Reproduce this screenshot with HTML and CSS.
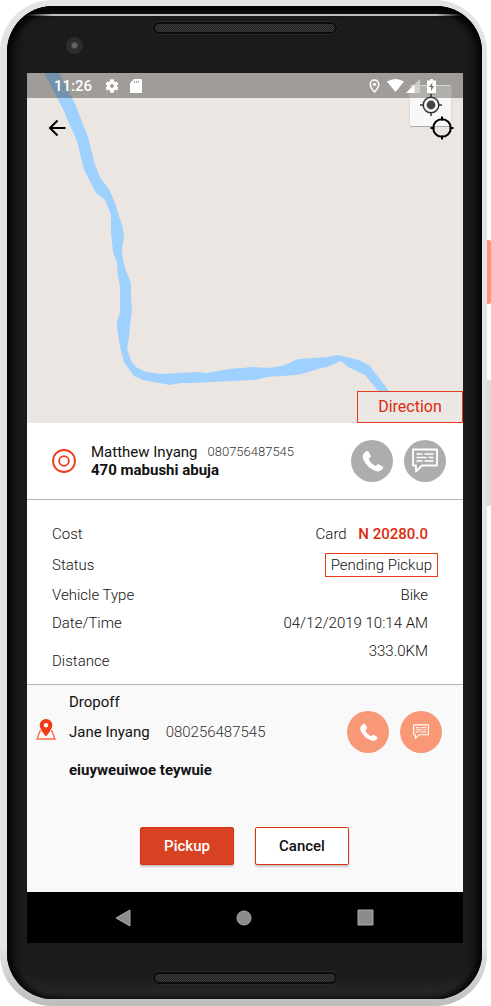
FILE: index.html
```html
<!DOCTYPE html>
<html lang="en">
<head>
<meta charset="utf-8">
<meta name="viewport" content="width=device-width, initial-scale=1">
<title>Delivery request</title>
<link rel="stylesheet" href="styles.css">
</head>
<body>
<svg class="defs" aria-hidden="true">
  <symbol id="phone" viewBox="0 0 24 24"><path d="M6.2 2.2c.6-.5 1.4-.4 1.900.2l2 3.500c.4.7.3 1.500-.3 2L8.400 9.200c.4 2.600 3.500 5.900 6.500 7l1.600-1.200c.5-.4 1.200-.5 1.800-.1l3.300 2c.7.400.8 1.300.3 1.900-1.500 2-3.500 3.200-6 2.500C9.300 19.500 3.500 13.500 2.500 7.500c-.3-2.200 1.700-4 3.700-5.300z" fill="#fff"/></symbol>
  <symbol id="chat" viewBox="0 0 28 26"><path d="M2 1.500h24v16H11l-6 6v-6H2z" fill="none" stroke="#fff" stroke-width="1.800" stroke-linejoin="round"/><path d="M5.500 6h6m2 0h9M5.500 9.500h10m2 0h5M5.500 13h6m2 0h9" fill="none" stroke="#fff" stroke-width="1.600"/></symbol>
</svg>
<div class="phone">
  <div class="side-keys"><span class="power"></span><span class="volume"></span></div>
  <div class="bezel">
    <div class="bezel-top"><span class="camera"></span><span class="speaker"></span></div>
    <main class="screen">
      <section class="map">
        <svg class="river" viewBox="0 0 436 350" preserveAspectRatio="xMinYMin slice" aria-hidden="true">
          <path fill="#9fd1ff" d="M17 0L32 0L49 33L61 64L68 92L74 106L82 116L88 130L92 143L95 152L97 163L95 177L96 187L99 198L104 210L104 227L105 237L103 252L102 265L100 276L104 288L109 294L119 299L135 301L170 299L180 300L202 296L227 294L241 295L255 293L271 286L300 284L311 282L332 287L343 293L362 318L373 334L362 334L351 318L338 302L321 294L314 288L300 294L290 296L282 299L270 302L240 304L228 307L183 309L166 310L154 310L143 312L116 307L107 303L97 289L93 274L90 255L90 249L93 239L93 214L91 203L90 190L86 179L84 160L84 142L78 127L69 120L57 97L50 68L34 32Z"/>
        </svg>
        <div class="status-bar">
          <span class="time">11:26</span>
          <svg width="16" height="16" viewBox="0 0 24 24"><path fill="#fff" fill-rule="evenodd" d="M19.400 13a7.800 7.800 0 0 0 0-2l2.300-1.700-2.300-4-2.700 1.100a8 8 0 0 0-1.700-1L14.600 2h-5.200L9 5.400a8 8 0 0 0-1.700 1L4.600 5.300l-2.300 4L4.600 11a7.800 7.800 0 0 0 0 2l-2.300 1.700 2.300 4 2.700-1.100a8 8 0 0 0 1.700 1l.4 3.400h5.200l.4-3.400a8 8 0 0 0 1.700-1l2.700 1.100 2.300-4zM12 15a3 3 0 1 1 0-6 3 3 0 0 1 0 6z"/></svg>
          <svg class="sd" width="12" height="14" viewBox="0 0 12 14"><path fill="#fff" d="M4 0h7q1 0 1 1v12q0 1-1 1H1q-1 0-1-1V4z"/><path d="M4.500 2v2m2-2v2m2-2v2" stroke="#a4a19b"/></svg>
          <span class="signals">
            <svg class="place" width="11" height="14" viewBox="0 0 11 14"><path d="M5.500 1a4.200 4.200 0 0 0-4.200 4.200C1.300 8.500 5.500 13 5.500 13s4.200-4.500 4.200-7.800A4.200 4.200 0 0 0 5.500 1z" fill="none" stroke="#fff" stroke-width="1.500"/><circle cx="5.500" cy="5.300" r="1.600" fill="#fff"/></svg>
            <svg width="17" height="13" viewBox="0 0 17 13"><path fill="#fff" d="M0 2.500Q8.500-2.500 17 2.500L8.500 13z"/></svg>
            <svg width="14" height="14" viewBox="0 0 14 14"><path fill="#d0cecb" d="M14 0v14H0z"/><path fill="#fff" d="M8.500 5.500V14H0z"/></svg>
            <svg class="battery" width="9" height="14" viewBox="0 0 9 14"><path fill="#fff" d="M3 0h3v1.500h3V14H0V1.500h3z"/><path fill="#77746f" d="M5.500 3.500L2 8h2v4l3-5H5z"/></svg>
          </span>
        </div>
        <div class="toolbar">
          <button class="icon-button" aria-label="Back"><svg width="18" height="18" viewBox="0 0 18 18"><path d="M17.500 9H2M9.500 1.500L2 9l7.500 7.500" fill="none" stroke="#000" stroke-width="2"/></svg></button>
          <button class="icon-button" aria-label="Locate"><svg width="24" height="24" viewBox="0 0 24 24"><g fill="none" stroke="#000" stroke-width="2"><circle cx="12" cy="12" r="8.800"/><path d="M12 .5v4M12 19.500v4M.5 12h4M19.500 12h4"/></g></svg></button>
        </div>
        <button class="my-location" aria-label="My location"><svg width="22" height="22" viewBox="0 0 22 22"><g fill="none" stroke="#333" stroke-width="1.500"><circle cx="11" cy="11" r="7.800"/><path d="M11 0v4M11 18v4M0 11h4M18 11h4"/></g><circle cx="11" cy="11" r="4.400" fill="#444"/></svg></button>
        <button class="direction">Direction</button>
      </section>

      <section class="pickup">
        <svg class="target" width="24" height="24" viewBox="0 0 24 24"><g fill="none" stroke="#ee3a1a" stroke-width="1.800"><circle cx="12" cy="12" r="11"/><circle cx="12" cy="12" r="4.800"/></g></svg>
        <div class="person">
          <div class="line"><span>Matthew Inyang</span><span class="tel small">080756487545</span></div>
          <strong>470 mabushi abuja</strong>
        </div>
        <div class="actions">
          <button class="round grey" aria-label="Call sender"><svg width="25" height="25"><use href="#phone"/></svg></button>
          <button class="round grey" aria-label="Message sender"><svg width="28" height="26"><use href="#chat"/></svg></button>
        </div>
      </section>

      <dl class="details">
        <div class="row cost"><dt>Cost</dt><dd>Card <b>N 20280.0</b></dd></div>
        <div class="row status"><dt>Status</dt><dd class="badge">Pending Pickup</dd></div>
        <div class="row"><dt>Vehicle Type</dt><dd>Bike</dd></div>
        <div class="row"><dt>Date/Time</dt><dd>04/12/2019 10:14 AM</dd></div>
        <div class="row distance"><dt>Distance</dt><dd>333.0KM</dd></div>
      </dl>

      <section class="dropoff">
        <h2>Dropoff</h2>
        <div class="recipient">
          <svg class="pin" width="20" height="21" viewBox="0 0 20 21"><path d="M5 12H4L1 20h18l-3-8h-1" fill="none" stroke="#ff6a48" stroke-width="1.400"/><path fill="#f13a18" fill-rule="evenodd" d="M10 0a6.300 6.300 0 0 0-6.300 6.300C3.700 10.500 10 17.500 10 17.500s6.300-7 6.300-11.200A6.300 6.300 0 0 0 10 0zm0 8.500a2.300 2.300 0 1 1 0-4.600 2.300 2.300 0 0 1 0 4.600z"/></svg>
          <div class="line"><span>Jane Inyang</span><span class="tel">080256487545</span></div>
          <div class="actions">
            <button class="round orange" aria-label="Call recipient"><svg width="21" height="21"><use href="#phone"/></svg></button>
            <button class="round orange" aria-label="Message recipient"><svg width="18" height="16"><use href="#chat"/></svg></button>
          </div>
        </div>
        <strong class="address">eiuyweuiwoe teywuie</strong>
        <div class="buttons"><button class="primary">Pickup</button><button class="secondary">Cancel</button></div>
      </section>

      <nav class="nav">
        <button aria-label="Back"><svg width="16" height="18" viewBox="0 0 16 18"><path fill="#8c8c8c" stroke="#aaa" d="M15 1v16L1 9z"/></svg></button>
        <button aria-label="Home"><svg width="16" height="16" viewBox="0 0 16 16"><circle cx="8" cy="8" r="7" fill="#8c8c8c" stroke="#aaa"/></svg></button>
        <button aria-label="Recent apps"><svg width="17" height="17" viewBox="0 0 17 17"><path fill="#8c8c8c" stroke="#aaa" d="M1 1h15v15H1z"/></svg></button>
      </nav>
    </main>
    <div class="bezel-bottom"><span class="speaker"></span></div>
  </div>
</div>
</body>
</html>
```
FILE: styles.css
```css
* { box-sizing: border-box; }
body { margin: 0; background: #fff; font: 15px/18px Roboto, sans-serif; color: #111; }
button { margin: 0; padding: 0; border: 0; background: none; font: inherit; color: inherit; display: flex; align-items: center; justify-content: center; }
svg { display: block; flex: none; }
.defs { position: absolute; width: 0; height: 0; }

.phone { position: relative; margin-right: 4px; padding: 6px 5px 7px 7px; border-radius: 52px; background: linear-gradient(#e4e4e4 94%, #bdbdbd); }
.side-keys span { position: absolute; left: 100%; width: 4px; }
.power { top: 240px; height: 64px; background: #ff9378; border-radius: 0 2px 2px 0; }
.volume { top: 380px; height: 126px; background: #dcdcdc; border-radius: 0 2px 2px 0; }
.bezel { position: relative; padding: 0 19px 0 20px; border-radius: 46px; background: #1b1b1b; box-shadow: inset 0 9px 5px -2px #050505, inset 7px 0 7px #080808, inset -7px 0 7px #080808, inset 0 -12px 12px #2b2b2b; }
.bezel::before { content: ""; position: absolute; top: 8px; left: 20px; right: 20px; height: 2px; background: linear-gradient(90deg, transparent, #bdbdbd 6%, #bdbdbd 94%, transparent); }
.bezel-top { position: relative; height: 67px; display: flex; justify-content: center; padding-top: 16px; }
.speaker { width: 184px; height: 12px; border-radius: 6px; border: 2px solid #0c0c0c; background: repeating-conic-gradient(#3a3a3a 0 25%, #232323 0 50%) 0 0 / 2px 2px; box-shadow: 0 0 0 1px #292929; }
.camera { position: absolute; left: 39px; top: 31px; width: 17px; height: 17px; border-radius: 50%; background: radial-gradient(circle, #666 0 2px, #2d2d2d 4px); }
.bezel-bottom { height: 56px; display: flex; justify-content: center; align-items: flex-start; padding-top: 29px; }

.screen { background: #fff; }
.map { position: relative; height: 350px; background: #ebe6e2; overflow: hidden; }
.river { position: absolute; inset: 0; width: 100%; height: 100%; }
.status-bar { position: relative; height: 25px; padding: 0 27px; display: flex; align-items: center; background: rgba(60, 60, 55, .43); color: #fff; font-weight: 500; }
.time { margin-right: 12px; }
.sd { margin-left: 10px; }
.signals { position: relative; z-index: 3; margin-left: auto; display: flex; align-items: center; gap: 2px; }
.place { margin-right: 5px; }
.battery { margin-left: 5px; }
.toolbar { position: relative; z-index: 2; display: flex; justify-content: space-between; align-items: center; height: 60px; padding: 0 9px 0 21px; }
.my-location { position: absolute; top: 12px; right: 11px; width: 43px; height: 42px; padding-bottom: 2px; border: 1px solid rgba(150, 150, 150, .3); border-radius: 3px; background: linear-gradient(#b2b0ac 12px, #f8f8f8 12px); }
.direction { position: absolute; right: 0; bottom: 0; width: 106px; height: 32px; border: 1px solid #e23a1c; background: #ebe7e4; color: #dc2b0c; font-size: 16px; }

.pickup { display: flex; align-items: center; height: 77px; padding: 0 17px 0 25px; border-bottom: 1px solid #b5b5b5; }
.person { margin-left: 15px; }
.line { display: flex; align-items: center; }
.tel { margin-left: 16px; font-weight: 300; color: #333; }
.tel.small { margin-left: 10px; font-size: 13px; }
strong { display: block; font-weight: 700; }
.actions { display: flex; gap: 11px; margin-left: auto; }
.round { width: 42px; height: 42px; border-radius: 50%; }
.grey { background: #adadad; }
.orange { background: #f89877; }

.details { margin: 0; padding: 19px 35px 9px 25px; border-bottom: 1px solid #b5b5b5; font-weight: 300; color: #111; }
.row { display: flex; justify-content: space-between; align-items: center; height: 28px; line-height: 28px; }
.row dd { margin: 0; }
.cost { height: 30px; }
.cost b { margin-left: 8px; font-weight: 500; color: #dc2b0c; }
.status { height: 32px; }
.row .badge { margin-right: -10px; padding: 0 5px; border: 1px solid #ee3a18; line-height: 22px; }
.distance { height: 38px; align-items: flex-start; }
.distance dt { padding-top: 10px; }

.dropoff { padding: 8px 21px 27px 9px; background: #f9f9f9; }
h2, .address { margin: 0 0 0 33px; font-size: 15px; line-height: 18px; }
h2 { font-weight: 400; }
.recipient { display: flex; align-items: center; }
.pin { margin-bottom: 6px; }
.recipient .line { margin-left: 13px; }
.address { margin-top: 8px; }
.buttons { display: flex; justify-content: center; gap: 21px; margin-top: 48px; padding-left: 11px; }
.buttons button { width: 94px; height: 38px; border: 1px solid #e0310f; border-radius: 2px; font-weight: 500; box-shadow: 0 2px 2px rgba(0, 0, 0, .2); }
.primary { background: #d94123; color: #fff; }
.secondary { background: #fff; }
.nav { display: grid; grid-template-columns: repeat(3, 1fr); padding: 0 37px 0 35px; height: 51px; background: #000; }
```
